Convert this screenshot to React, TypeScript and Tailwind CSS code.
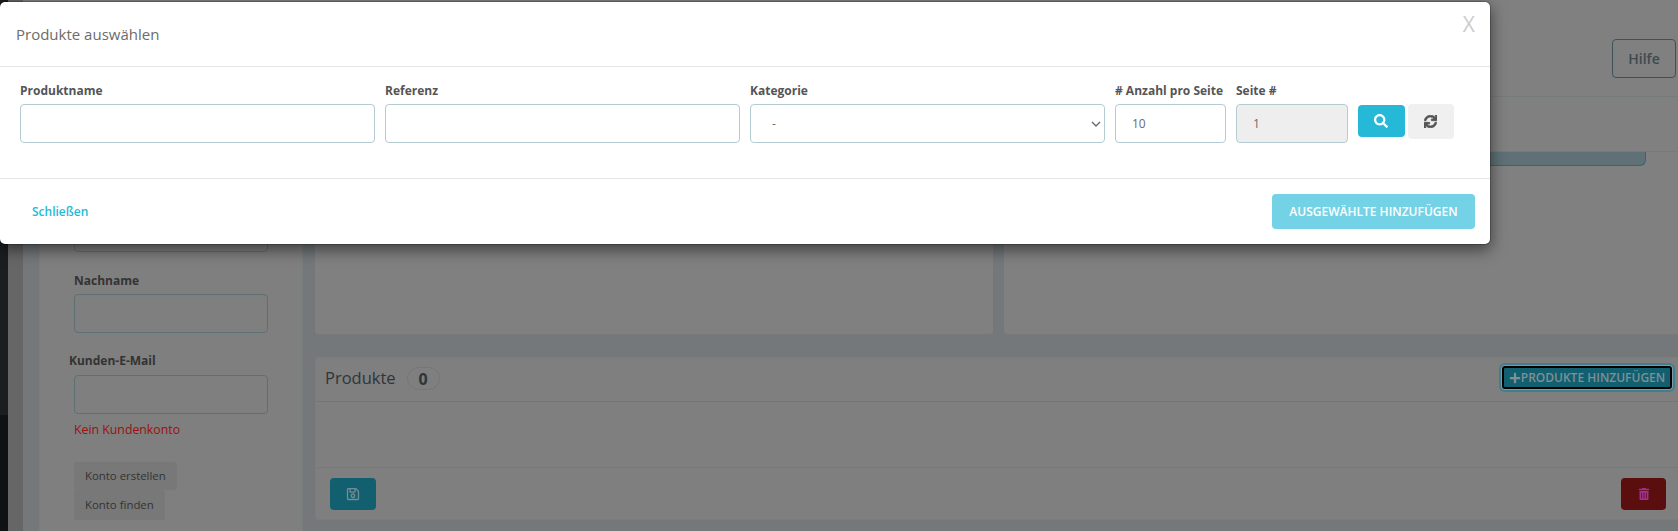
import { FaPlus, FaRegSave, FaSearch, FaSync, FaTrashAlt } from 'react-icons/fa';

function Field({ label, width, value, disabled }: { label: string; width: string; value?: string; disabled?: boolean }) {
  return (
    <div className={`flex shrink-0 flex-col ${width}`}>
      <label className="mb-[4px] h-[18px] text-[12px] leading-[18px] font-bold whitespace-nowrap text-[#555]">{label}</label>
      <input
        readOnly
        defaultValue={value}
        disabled={disabled}
        className={`h-[39px] w-full rounded-[4px] border border-[#b5cbd3] px-[16px] text-[12px] text-[#6c6c6c] outline-none ${
          disabled ? 'bg-[#eeeeee]' : 'bg-white'
        }`}
      />
    </div>
  );
}

function Background() {
  return (
    <div className="flex h-[531px] w-full bg-[#808080]">
      {/* sidebar */}
      <div className="flex w-[8px] shrink-0 flex-col">
        <div className="h-[415px] bg-[#1b1d21]" />
        <div className="flex-1 bg-[#0f1114]" />
      </div>
      <div className="w-[15px] shrink-0 bg-[#666666]" />

      <div className="flex min-w-0 flex-1 flex-col">
        {/* page header */}
        <div className="flex h-[97px] shrink-0 justify-end border-b border-[#757a7c] pt-[39px] pr-[2px]">
          <button
            type="button"
            className="h-[39px] w-[64px] rounded-[4px] border border-[#3f5257] text-[14px] font-semibold text-[#3d4a50]"
          >
            Hilfe
          </button>
        </div>
        <div className="h-[55px] shrink-0 border-b border-[#757a7c]" />

        {/* page body */}
        <div className="flex min-h-0 flex-1 gap-[12px] bg-[#74787a] pl-[16px]">
          <div className="flex w-[264px] shrink-0 flex-col border-x border-[#787d80] bg-[#7f7f7f] pt-[61px] pl-[34px]">
            <div className="h-[39px] w-[194px] rounded-[4px] border border-[#5f7072]" />
            <div className="mt-[20px] mb-[4px] h-[18px] text-[12px] leading-[18px] font-bold text-[#333]">Nachname</div>
            <div className="h-[39px] w-[194px] rounded-[4px] border border-[#5f7072]" />
            <div className="mt-[19px] mb-[5px] -ml-[5px] h-[18px] text-[12px] leading-[18px] font-bold text-[#333]">
              Kunden-E-Mail
            </div>
            <div className="h-[39px] w-[194px] rounded-[4px] border border-[#5f7072]" />
            <div className="mt-[7px] h-[18px] text-[12.3px] leading-[18px] font-medium text-[#9c1010]">Kein Kundenkonto</div>
            <div className="mt-[23px] flex flex-col items-start">
              <button type="button" className="h-[28px] rounded-[3px] bg-[#787878] px-[11px] text-[11.4px] text-[#333]">
                Konto erstellen
              </button>
              <button type="button" className="h-[30px] rounded-[3px] bg-[#787878] px-[11px] text-[11.4px] text-[#333]">
                Konto finden
              </button>
            </div>
          </div>

          <div className="flex min-w-0 flex-1 flex-col">
            <div className="h-[14px] shrink-0 bg-[#808080]">
              <div className="h-[14px] w-[1331px] rounded-b-[6px] border-x border-b border-[#2a6a78] bg-[#5f7176]" />
            </div>

            <div className="flex h-[169px] shrink-0 gap-[11px]">
              <div className="w-[678px] shrink-0 rounded-b-[4px] border-b border-[#75797b] bg-[#808080]" />
              <div className="flex-1 rounded-bl-[4px] border-b border-[#75797b] bg-[#808080]" />
            </div>

            <div className="mt-[22px] h-[163px] rounded-l-[4px] border-y border-l border-[#787d80] bg-[#7f7f7f]">
              <div className="flex h-[44px] items-center justify-between border-b border-[#737679] pr-[6px] pl-[9px]">
                <div className="-mt-[2px] flex items-center">
                  <span className="text-[16.5px] font-medium text-[#2e3538]">Produkte</span>
                  <span className="ml-[11px] flex h-[23px] w-[33px] items-center justify-center rounded-full border border-[#747678] text-[16px] font-bold text-[#2e3538]">
                    0
                  </span>
                </div>
                <button
                  type="button"
                  className="-mt-[4px] flex h-[23px] w-[170px] items-center justify-center rounded-[3px] border-2 border-black bg-[#125f70] text-[12px] font-semibold whitespace-nowrap text-[#7f8f95] shadow-[0_0_0_1px_#7f9aa2,0_0_0_3px_#3f7f8f]"
                >
                  <FaPlus className="size-[12px]" />
                  PRODUKTE HINZUFÜGEN
                </button>
              </div>
              <div className="h-[66px] border-b border-[#767a7c]" />
              <div className="flex items-center justify-between pt-[10px] pr-[12px] pl-[14px]">
                <button type="button" className="flex h-[32px] w-[46px] items-center justify-center rounded-[4px] bg-[#125f70]">
                  <FaRegSave className="size-[14px] text-[#718d95]" />
                </button>
                <button type="button" className="flex h-[32px] w-[45px] items-center justify-center rounded-[4px] bg-[#5a0e0e]">
                  <FaTrashAlt className="size-[12px] text-[#a03090]" />
                </button>
              </div>
            </div>
          </div>
        </div>
      </div>
    </div>
  );
}

export default function App() {
  return (
    <div className="relative h-[531px] w-full overflow-hidden font-['Open_Sans',sans-serif]">
      <Background />

      {/* modal */}
      <div className="absolute top-[1px] -left-[1px] flex h-[244px] w-[1492px] flex-col rounded-[6px] border border-black/20 bg-white bg-clip-padding shadow-[0_5px_15px_rgba(0,0,0,0.5)]">
        <div className="flex h-[65px] shrink-0 items-center justify-between border-b border-[#e5e5e5] pr-[15px] pl-[16px]">
          <h4 className="text-[15px] text-[#6c6c6c]">Produkte auswählen</h4>
          <span className="-mt-[19px] text-[21px] leading-none text-[#cccccc]">X</span>
        </div>

        <div className="flex h-[112px] shrink-0 gap-[10.5px] border-b border-[#e5e5e5] pt-[15px] pl-[20px]">
          <Field label="Produktname" width="w-[354.5px]" />
          <Field label="Referenz" width="w-[354.5px]" />
          <div className="flex w-[354.5px] shrink-0 flex-col">
            <label className="mb-[4px] h-[18px] text-[12px] leading-[18px] font-bold text-[#555]">Kategorie</label>
            <div className="relative">
              <select className="h-[39px] w-full appearance-none rounded-[4px] border border-[#b5cbd3] bg-white pl-[21px] text-[12px] text-[#6c6c6c] outline-none">
                <option>-</option>
              </select>
              <svg viewBox="0 0 10 6" className="absolute top-[17px] right-[4px] h-[6px] w-[10px] text-[#666]" fill="none">
                <path d="M1 1l4 4 4-4" stroke="currentColor" strokeWidth="1.3" />
              </svg>
            </div>
          </div>
          <Field label="# Anzahl pro Seite" width="w-[110.5px]" value="10" />
          <Field label="Seite #" width="w-[111.5px]" value="1" disabled />
          <div className="-ml-[0.5px] flex items-start gap-[3px] pt-[22px]">
            <button type="button" className="mt-[1px] flex h-[32px] w-[47px] items-center justify-center rounded-[4px] bg-[#25b9d7]">
              <FaSearch className="size-[14px] text-white" />
            </button>
            <button type="button" className="flex h-[35px] w-[46px] items-center justify-center rounded-[4px] bg-[#f0f0f0]">
              <FaSync className="size-[13px] stroke-[30] text-[#555]" />
            </button>
          </div>
        </div>

        <div className="flex flex-1 items-center justify-between pr-[15px] pl-[32px]">
          <a className="text-[12px] font-semibold text-[#25b9d7]">Schließen</a>
          <button type="button" className="h-[35px] w-[203px] rounded-[4px] bg-[#74d2e6] text-[12px] font-semibold text-white">
            AUSGEWÄHLTE HINZUFÜGEN
          </button>
        </div>
      </div>
    </div>
  );
}
